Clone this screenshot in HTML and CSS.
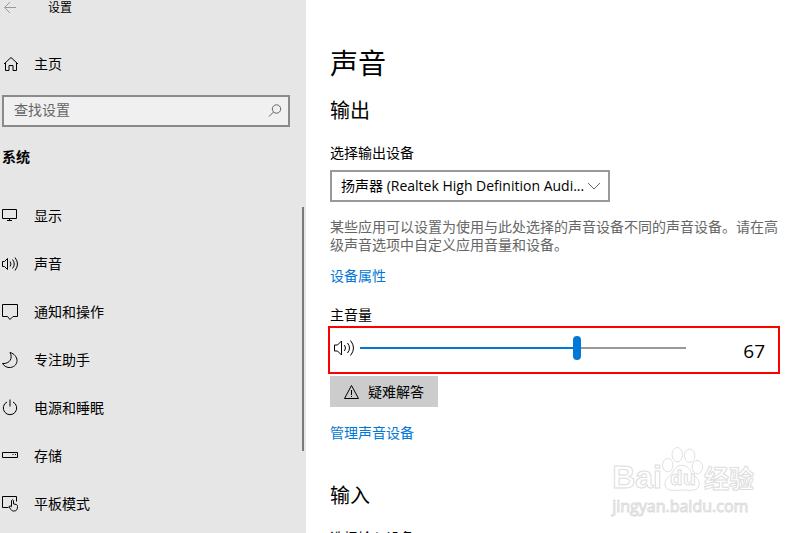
FILE: index.html
```html
<!DOCTYPE html>
<html lang="zh-CN">
<head>
<meta charset="utf-8">
<meta name="viewport" content="width=device-width, initial-scale=1">
<title>设置</title>
<link rel="stylesheet" href="styles.css">
</head>
<body>
<div class="window">
  <aside class="sidebar">
    <header class="titlebar">
      <button class="back" type="button" aria-label="返回">
        <svg class="icon" viewBox="0 0 16 16"><path d="M14 7.500H2.500M8 2L2.500 7.500L8 13"/></svg>
      </button>
      <span>设置</span>
    </header>
    <a class="item home" href="#">
      <svg class="icon" viewBox="0 0 16 16"><path d="M2 8L9 1.500L16 8M3.500 7v7.500h3.500V9.500h4v5h3.500V7"/></svg>
      <span>主页</span>
    </a>
    <label class="search">
      <input type="search" placeholder="查找设置" aria-label="查找设置">
      <svg class="icon" viewBox="0 0 16 16"><circle cx="10.500" cy="6" r="4.200"/><path d="M7.500 9L3 13.500"/></svg>
    </label>
    <h2 class="group">系统</h2>
    <nav class="nav">
      <a class="item" href="#">
        <svg class="icon" viewBox="0 0 16 16"><path d="M.5 1.500h14v9H.5zM7.500 10.500v2M5 12.500h5"/></svg>
        <span>显示</span>
      </a>
      <a class="item" href="#">
        <svg class="icon" viewBox="0 0 16 16"><path d="M.5 5.500H2.500L5.500 2.500v11L2.500 10.500H.5zM8 5.500q2 2.500 0 5M10.500 3.500q3.500 4.500 0 9M13 1.500q5 6.500 0 13"/></svg>
        <span>声音</span>
      </a>
      <a class="item" href="#">
        <svg class="icon" viewBox="0 0 16 16"><path d="M.5.5h15v12H11L8 15.500L5.500 12.500h-5z"/></svg>
        <span>通知和操作</span>
      </a>
      <a class="item" href="#">
        <svg class="icon" viewBox="0 0 16 16"><path d="M8 .5C17 3 17.500 14 8.500 15.500C5 16 2 14 .5 11.500C8 12 11 6 8 .5z"/></svg>
        <span>专注助手</span>
      </a>
      <a class="item" href="#">
        <svg class="icon" viewBox="0 0 16 16"><path d="M5 2a6.700 6.700 0 1 0 6 0M8 -.5v7"/></svg>
        <span>电源和睡眠</span>
      </a>
      <a class="item" href="#">
        <svg class="icon" viewBox="0 0 16 16"><path d="M.5 4.500h15v5H.5zM10.500 6.500h1M13 6.500h1"/></svg>
        <span>存储</span>
      </a>
      <a class="item" href="#">
        <svg class="icon" viewBox="0 0 16 16"><path d="M6.500 11.500h-6v-11h14v5M9.500 10.500V4.500q1-1.500 2 0v3.500l3 .5q1 .5 1 2c0 3-1 4.500-3.500 4.500c-2 0-3-.5-5-4.500q1-1.500 2.500.5"/></svg>
        <span>平板模式</span>
      </a>
      <i class="scroll-thumb"></i>
    </nav>
  </aside>

  <main class="content">
    <h1>声音</h1>
    <section>
      <h2 class="section-title">输出</h2>
      <label class="caption" for="output">选择输出设备</label>
      <div class="picker">
        <select id="output"><option>扬声器 (Realtek High Definition Audi...</option></select>
        <svg class="icon" viewBox="0 0 16 16"><path d="M2 5l6 6l6-6"/></svg>
      </div>
      <p class="hint">某些应用可以设置为使用与此处选择的声音设备不同的声音设备。请在高级声音选项中自定义应用音量和设备。</p>
      <a class="link" href="#">设备属性</a>
      <label class="caption volume-label" for="volume">主音量</label>
      <div class="volume">
        <svg class="speaker" viewBox="0 0 22 20"><path d="M1.500 7h3L8.500 3v14l-4-4h-3zM11.500 7q2 3 0 6M14.500 5q4 5 0 10M17.500 2.500q6 7.500 0 15"/></svg>
        <input id="volume" type="range" min="0" max="100" value="67">
        <output for="volume">67</output>
      </div>
      <button class="troubleshoot" type="button">
        <svg class="icon" viewBox="0 0 16 16"><path d="M7.500 1.500L14.500 14.500H.5zM7.500 6v5M7.500 12v1"/></svg>
        <span>疑难解答</span>
      </button>
      <a class="link" href="#">管理声音设备</a>
    </section>
    <section class="input-section">
      <h2 class="section-title">输入</h2>
      <div class="caption">选择输入设备</div>
    </section>
  </main>

  <div class="watermark">
    <div class="brand">
      <span class="latin">Bai</span>
      <span class="paw">
        <svg viewBox="0 0 44 48"><ellipse cx="6" cy="20" rx="5.500" ry="7"/><ellipse cx="16" cy="9" rx="5.500" ry="7.500"/><ellipse cx="29" cy="10" rx="5.500" ry="7"/><ellipse cx="37" cy="22" rx="5.500" ry="7"/><path d="M21 20c6 0 8 5 11 9c5 5 9 8 6 14c-3 5-10 3-17 3s-14 2-17-3c-3-6 2-10 6-14c3-4 5-9 11-9z"/></svg>
        <b>du</b>
      </span>
      <span class="han">经验</span>
    </div>
    <div class="site">jingyan.baidu.com</div>
  </div>
</div>
</body>
</html>
```
FILE: styles.css
```css
* {
  box-sizing: border-box;
}

body {
  margin: 0;
  font: 14px/20px "Open Sans", "Noto Sans CJK SC", sans-serif;
  color: #000;
  background: #fff;
}

h1, h2, p {
  margin: 0;
  font-weight: 400;
}

a {
  color: inherit;
  text-decoration: none;
}

button, input, select {
  font: inherit;
  color: inherit;
}

svg {
  fill: none;
  stroke: currentColor;
}

.window {
  position: relative;
  display: flex;
  height: 100vh;
  overflow: hidden;
}

.icon {
  flex: none;
  width: 16px;
  height: 16px;
}

/* Sidebar */
.sidebar {
  flex: 0 0 306px;
  background: #e6e6e6;
  padding-left: 2px;
}

.titlebar {
  display: flex;
  align-items: center;
  gap: 30px;
  height: 16px;
  font-size: 12px;
  line-height: 16px;
}

.back {
  display: flex;
  padding: 0;
  border: 0;
  background: none;
  color: #999;
}

.item {
  display: flex;
  align-items: center;
  gap: 16px;
  height: 48px;
}

.item .icon {
  overflow: visible;
}

.home {
  margin: 24px 0 7px;
}

.search {
  display: flex;
  align-items: center;
  height: 32px;
  margin-right: 16px;
  padding: 0 6px 0 10px;
  border: 2px solid #8a8a8a;
  background: #f0f0f0;
  color: #666;
}

.search input {
  flex: 1;
  min-width: 0;
  padding: 0 0 2px;
  border: 0;
  outline: 0;
  background: none;
}

.search input::placeholder {
  color: #666;
  opacity: 1;
}

.group {
  margin: 20px 0 25px;
  font-size: 14px;
  font-weight: 700;
}

.nav {
  position: relative;
}

.scroll-thumb {
  position: absolute;
  top: 15px;
  right: 2px;
  width: 2px;
  height: 244px;
  background: #7a7a7a;
}

/* Content */
.content {
  flex: 1;
  min-width: 0;
  padding: 43px 18px 0 24px;
}

.content h1 {
  font-size: 28px;
  line-height: 40px;
}

.section-title {
  margin: 14px 0 18px;
  font-size: 20px;
  line-height: 28px;
}

.caption {
  display: block;
}

.picker {
  position: relative;
  max-width: 280px;
  margin: 7px 0 16px;
}

.picker select {
  display: block;
  width: 100%;
  height: 32px;
  padding: 0 22px 0 9px;
  border: 2px solid #999;
  border-radius: 0;
  background: #fff;
  appearance: none;
}

.picker .icon {
  position: absolute;
  top: 8px;
  right: 8px;
  color: #666;
  pointer-events: none;
}

.hint {
  line-height: 18px;
  color: #666;
}

.link {
  display: block;
  width: fit-content;
  margin-top: 12px;
  color: #0078d7;
}

.volume-label {
  margin-top: 19px;
}

.volume {
  display: flex;
  align-items: center;
  height: 48px;
  margin: 1px 0 2px -2px;
  padding: 0 13px 4px 3px;
  border: 2px solid #f00;
}

.speaker {
  flex: none;
  width: 22px;
  height: 20px;
  margin-right: 5px;
}

.volume input {
  flex: 1;
  min-width: 0;
  height: 24px;
  margin: 0;
  appearance: none;
  background: linear-gradient(90deg, #0078d7 67%, #999 67%) center / 100% 2px no-repeat;
}

.volume input::-webkit-slider-thumb {
  appearance: none;
  width: 8px;
  height: 24px;
  border-radius: 4px;
  background: #0078d7;
}

.volume output {
  width: 79px;
  padding-top: 6px;
  font-size: 19px;
  line-height: 24px;
  text-align: right;
}

.troubleshoot {
  display: flex;
  align-items: center;
  gap: 8px;
  height: 31px;
  margin-bottom: 16px;
  padding: 0 14px;
  border: 0;
  background: #ccc;
}

.input-section {
  margin-top: 39px;
}

/* Watermark */
.watermark {
  position: absolute;
  right: 44px;
  bottom: 16px;
  color: #fff;
  -webkit-text-stroke: 1px #ddd;
  pointer-events: none;
}

.brand {
  display: flex;
  align-items: flex-end;
  height: 50px;
  padding-bottom: 2px;
}

.latin {
  font: 700 32px/32px "Liberation Sans", sans-serif;
}

.paw {
  position: relative;
  width: 42px;
  height: 48px;
}

.paw svg {
  width: 42px;
  height: 48px;
  stroke: #ddd;
}

.paw b {
  position: absolute;
  inset: 21px 0 0;
  font: 700 20px/24px "Open Sans", sans-serif;
  text-align: center;
}

.han {
  font: 700 25px/32px "Noto Sans CJK SC", sans-serif;
}

.site {
  font-size: 16px;
  line-height: 22px;
}
```
